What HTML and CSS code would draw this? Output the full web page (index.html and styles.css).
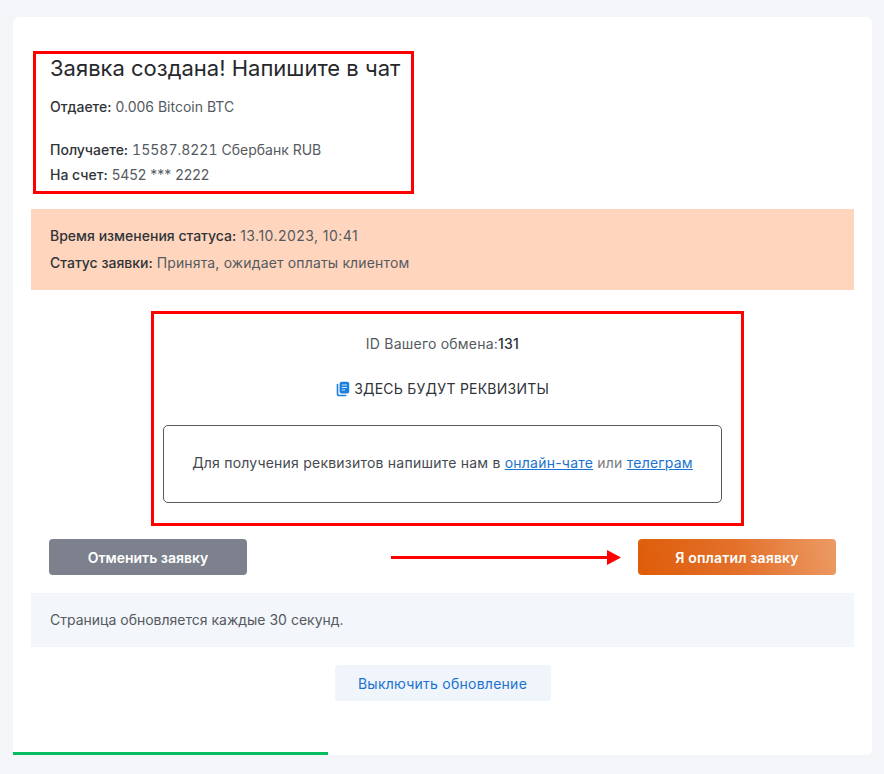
FILE: index.html
```html
<!DOCTYPE html>
<html lang="en">
<head>
    <meta charset="UTF-8">
    <title>Заявка создана</title>
    <link rel="stylesheet" href="styles.css">
</head>
<body>
    <div class="card">
        <div class="summary">
            <h1 class="title">Заявка создана! Напишите в чат</h1>
            <p class="line gapBelow"><b>Отдаете:</b> 0.006 Bitcoin BTC</p>
            <p class="line"><b>Получаете:</b> <span class="amount">15587.8221</span> Сбербанк RUB</p>
            <p class="line"><b>На счет:</b> 5452 *** 2222</p>
        </div>

        <div class="status">
            <p class="statusLine"><b>Время изменения статуса:</b> <span class="statusTime">13.10.2023, 10:41</span></p>
            <p class="statusLine"><b>Статус заявки:</b> <span class="statusText">Принята, ожидает оплаты клиентом</span></p>
        </div>

        <div class="details">
            <p class="exchangeId">ID Вашего обмена:<b>131</b></p>
            <p class="requisites">
                <svg class="copyIcon" viewBox="0 0 14 16" width="14" height="16">
                    <path d="M1.5 3.5v9.2c0 1 .8 1.8 1.8 1.8h6.4" fill="none" stroke="#1a7fe0" stroke-width="1.6" stroke-linecap="round"/>
                    <rect x="3.6" y="0.8" width="9.6" height="11.8" rx="2" fill="#1a7fe0"/>
                    <path d="M5.8 4h5.2M5.8 6.5h5.2M5.8 9h3.2" stroke="#d5e8fa" stroke-width="1.1"/>
                </svg>
                ЗДЕСЬ БУДУТ РЕКВИЗИТЫ
            </p>
            <div class="notice">
                Для получения реквизитов напишите нам в <a href="#">онлайн-чате</a> <span class="muted">или</span> <a href="#">телеграм</a>
            </div>
        </div>

        <div class="actions">
            <button class="btn btnCancel">Отменить заявку</button>
            <button class="btn btnPaid">Я оплатил заявку</button>
        </div>

        <div class="refresh">Страница обновляется каждые 30 секунд.</div>

        <div class="refreshAction">
            <button class="btnRefresh">Выключить обновление</button>
        </div>

        <!-- annotations drawn over the screenshot -->
        <div class="mark markSummary"></div>
        <div class="mark markDetails"></div>
        <svg class="arrow" width="230" height="15" viewBox="0 0 230 15">
            <path d="M0 7.5h216" stroke="#f00" stroke-width="3"/>
            <path d="M216 0l14 7.5-14 7.5z" fill="#f00"/>
        </svg>

        <div class="progress"></div>
    </div>
</body>
</html>
```

FILE: styles.css
```css
body{
    margin: 0;
    padding: 17px 12px 19px 13px;
    background-color: #f3f5f9;
    font-family: "Inter", "Noto Sans", sans-serif;
    font-size: 14px;
    color: #555a60;
}
p{
    margin: 0;
}
b{
    font-weight: 500;
    color: #303338;
}
.card{
    position: relative;
    height: 738px;
    box-sizing: border-box;
    padding: 37px 18px 0px 18px;
    background-color: white;
    border-radius: 6px 6px 6px 0;
    overflow: hidden;
}
.summary{
    padding-left: 19px;
    height: 155px;
}
.title{
    margin: 0 0 12px 0;
    font-size: 22px;
    line-height: 28px;
    font-weight: 400;
    color: #26282c;
}
.line{
    line-height: 25px;
}
.gapBelow{
    margin-bottom: 18px;
}
.amount{
    font-variant-numeric: tabular-nums;
}
.status{
    background-color: #ffd6bd;
    padding: 13px 19px;
    height: 81px;
    box-sizing: border-box;
}
.statusLine{
    line-height: 27px;
}
.statusTime{
    letter-spacing: 0.45px;
}
.statusText{
    letter-spacing: 0.15px;
}
.details{
    margin: 21px auto 0 auto;
    width: 559px;
    height: 214px;
    text-align: center;
    letter-spacing: 0.22px;
}
.exchangeId{
    padding-top: 21px;
    line-height: 24px;
}
.requisites{
    margin-top: 21px;
    line-height: 24px;
    color: #303338;
}
.copyIcon{
    vertical-align: -3px;
}
.notice{
    margin-top: 24px;
    height: 78px;
    line-height: 74px;
    box-sizing: border-box;
    border: 1px solid #555a60;
    border-radius: 5px;
    color: #45494e;
}
.notice a{
    color: #1a73d0;
}
.muted{
    color: #777b80;
}
.actions{
    display: flex;
    justify-content: space-between;
    margin-top: 14px;
    padding: 0 18px;
}
.btn{
    width: 198px;
    height: 36px;
    border: none;
    border-radius: 4px;
    color: white;
    font-family: inherit;
    font-size: 14px;
    font-weight: 600;
}
.btnCancel{
    background-color: #7c818d;
}
.btnPaid{
    background: linear-gradient(75deg, #de5c08 0%, #e3702a 50%, #ec9b65 100%);
    letter-spacing: 0.15px;
}
.refresh{
    margin-top: 18px;
    height: 54px;
    line-height: 54px;
    padding: 0 19px;
    background-color: #f3f6fb;
}
.refreshAction{
    display: flex;
    justify-content: center;
    margin-top: 18px;
}
.btnRefresh{
    width: 216px;
    height: 36px;
    border: none;
    border-radius: 4px;
    background-color: #f0f4fb;
    color: #1a73d0;
    font-family: inherit;
    font-size: 14px;
    letter-spacing: 0.25px;
}
.mark{
    position: absolute;
    border: 3px solid #f00;
    box-sizing: border-box;
}
.markSummary{
    left: 20px;
    top: 34px;
    width: 381px;
    height: 143px;
}
.markDetails{
    left: 138px;
    top: 294px;
    width: 593px;
    height: 215px;
}
.arrow{
    position: absolute;
    left: 378px;
    top: 533px;
}
.progress{
    position: absolute;
    left: 0;
    bottom: 0;
    width: 315px;
    height: 3px;
    background-color: #00bd63;
}
```
